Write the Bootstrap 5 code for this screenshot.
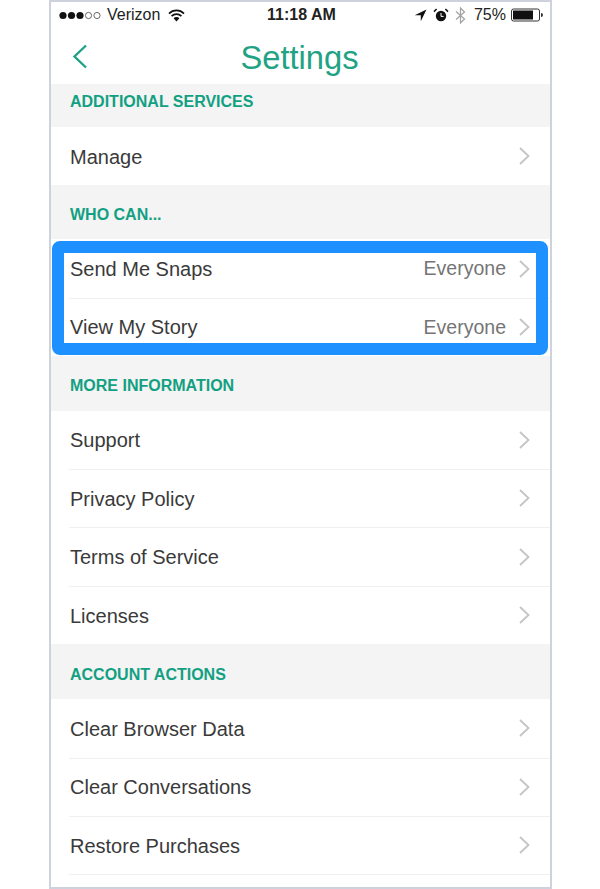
<!DOCTYPE html>
<html lang="en">
<head>
  <meta charset="UTF-8">
  <title>Settings</title>
  <link href="https://cdn.jsdelivr.net/npm/bootstrap@5.3.3/dist/css/bootstrap.min.css" rel="stylesheet">
  <style>
    html, body { height: 889px; overflow: hidden; background: #fff; }
    body { font-family: "Liberation Sans", Arial, sans-serif; }
    .phone-frame { width: 503px; height: 889px; margin-left: 49px; border: 2px solid #cdd2dd; background: #fff; overflow: hidden; }
    .status-bar { height: 25px; padding: 1px 5px 0 7px; font-size: 16px; color: #222; }
    .status-time { font-weight: 700; left: 216px; top: 1px; }
    .icon-gap { margin-left: 6px; }
    .nav-head { height: 57px; }
    .nav-title { color: #1fa384; font-size: 32.7px; line-height: 62px; padding-right: 2px; }
    .back-btn { left: 21px; top: 17px; }
    .group-head { background: #f4f4f4; color: #12a082; font-weight: 700; font-size: 16px; padding-left: 19px; }
    .head-a { height: 43px; padding-top: 6px; }
    .head-b { height: 54px; padding-top: 18px; }
    .head-c { height: 54.5px; padding-top: 18px; }
    .head-d { height: 55px; padding-top: 19px; }
    .set-row { height: 58.4px; padding: 1px 20px 0 19px; font-size: 20px; color: #3a3a3a; }
    .set-row + .set-row::before { content: ""; position: absolute; left: 18px; right: 0; top: 0; border-top: 1px solid #f0f0f0; }
    .set-value { color: #757575; font-size: 19.5px; margin-right: 13px; }
    .row-arrow { margin-bottom: 1px; }
    .highlight-box { inset: 2px 2px 1px 1px; border: 12px solid #1e90ff; border-radius: 8px; pointer-events: none; }
  </style>
</head>
<body>
  <div class="phone-frame">
    <!-- Status bar -->
    <div class="status-bar d-flex align-items-center position-relative">
      <svg width="45" height="9" viewBox="0 0 43 9" class="me-1">
        <circle cx="4" cy="4.5" r="3.6" fill="#111"/>
        <circle cx="12.5" cy="4.5" r="3.6" fill="#111"/>
        <circle cx="21" cy="4.5" r="3.6" fill="#111"/>
        <circle cx="29.5" cy="4.5" r="3.1" fill="none" stroke="#444" stroke-width=".8"/>
        <circle cx="38" cy="4.5" r="3.1" fill="none" stroke="#444" stroke-width=".8"/>
      </svg>
      <span>Verizon</span>
      <svg width="17" height="13" viewBox="0 0 17 13" class="ms-2">
        <path d="M1 4.6a10.4 10.4 0 0 1 15 0" fill="none" stroke="#111" stroke-width="1.7"/>
        <path d="M3.6 7.2a6.7 6.7 0 0 1 9.8 0" fill="none" stroke="#111" stroke-width="1.7"/>
        <path d="M5.6 9.3a3.8 3.8 0 0 1 5.8 0L8.5 12.6z" fill="#111"/>
      </svg>
      <span class="status-time position-absolute">11:18 AM</span>
      <div class="ms-auto d-flex align-items-center">
        <svg width="13" height="13" viewBox="0 0 13 13"><path d="M12.5.5 6.8 12.3V6.2H.7z" fill="#111"/></svg>
        <svg width="16" height="15" viewBox="0 0 16 15" class="icon-gap">
          <circle cx="8" cy="8" r="5.2" fill="#111"/>
          <path d="M8 5v3.4h2.6" fill="none" stroke="#fff" stroke-width="1"/>
          <path d="M1 3.600 3.600 1M15 3.600 12.400 1" stroke="#111" stroke-width="1.500"/>
        </svg>
        <svg width="11" height="17" viewBox="0 0 11 17" class="icon-gap">
          <path d="M1 4.500 9.500 12 5.500 16V1L9.500 5 1 12.500" fill="none" stroke="#a2a2a2" stroke-width="1.200"/>
        </svg>
        <span class="ms-2">75%</span>
        <svg width="35" height="14" viewBox="0 0 33 14" class="ms-1">
          <rect x=".5" y="1" width="28" height="12" rx="2" fill="none" stroke="#333"/>
          <rect x="2" y="2.500" width="20" height="9" fill="#111"/>
          <path d="M30 5v4a2 2 0 0 0 0-4z" fill="#333"/>
        </svg>
      </div>
    </div>

    <!-- Nav -->
    <div class="nav-head position-relative text-center">
      <svg class="back-btn position-absolute" width="16" height="25" viewBox="0 0 16 25">
        <path d="M14 1.500 2.500 12.500 14 23.500" fill="none" stroke="#1fa384" stroke-width="2.400"/>
      </svg>
      <div class="nav-title">Settings</div>
    </div>

    <div class="group-head head-a">ADDITIONAL SERVICES</div>
    <div class="set-row d-flex align-items-center position-relative">
      <span>Manage</span>
      <svg class="row-arrow ms-auto" width="11" height="18" viewBox="0 0 11 18"><path d="M1 1l8.500 8L1 17" fill="none" stroke="#c4c4c4" stroke-width="1.800"/></svg>
    </div>

    <div class="group-head head-b">WHO CAN...</div>
    <div class="position-relative">
      <div class="set-row d-flex align-items-center position-relative">
        <span>Send Me Snaps</span>
        <span class="set-value ms-auto">Everyone</span>
        <svg class="row-arrow" width="11" height="18" viewBox="0 0 11 18"><path d="M1 1l8.500 8L1 17" fill="none" stroke="#c4c4c4" stroke-width="1.800"/></svg>
      </div>
      <div class="set-row d-flex align-items-center position-relative">
        <span>View My Story</span>
        <span class="set-value ms-auto">Everyone</span>
        <svg class="row-arrow" width="11" height="18" viewBox="0 0 11 18"><path d="M1 1l8.500 8L1 17" fill="none" stroke="#c4c4c4" stroke-width="1.800"/></svg>
      </div>
      <div class="highlight-box position-absolute"></div>
    </div>

    <div class="group-head head-c">MORE INFORMATION</div>
    <div class="set-row d-flex align-items-center position-relative">
      <span>Support</span>
      <svg class="row-arrow ms-auto" width="11" height="18" viewBox="0 0 11 18"><path d="M1 1l8.500 8L1 17" fill="none" stroke="#c4c4c4" stroke-width="1.800"/></svg>
    </div>
    <div class="set-row d-flex align-items-center position-relative">
      <span>Privacy Policy</span>
      <svg class="row-arrow ms-auto" width="11" height="18" viewBox="0 0 11 18"><path d="M1 1l8.500 8L1 17" fill="none" stroke="#c4c4c4" stroke-width="1.800"/></svg>
    </div>
    <div class="set-row d-flex align-items-center position-relative">
      <span>Terms of Service</span>
      <svg class="row-arrow ms-auto" width="11" height="18" viewBox="0 0 11 18"><path d="M1 1l8.500 8L1 17" fill="none" stroke="#c4c4c4" stroke-width="1.800"/></svg>
    </div>
    <div class="set-row d-flex align-items-center position-relative">
      <span>Licenses</span>
      <svg class="row-arrow ms-auto" width="11" height="18" viewBox="0 0 11 18"><path d="M1 1l8.500 8L1 17" fill="none" stroke="#c4c4c4" stroke-width="1.800"/></svg>
    </div>

    <div class="group-head head-d">ACCOUNT ACTIONS</div>
    <div class="set-row d-flex align-items-center position-relative">
      <span>Clear Browser Data</span>
      <svg class="row-arrow ms-auto" width="11" height="18" viewBox="0 0 11 18"><path d="M1 1l8.500 8L1 17" fill="none" stroke="#c4c4c4" stroke-width="1.800"/></svg>
    </div>
    <div class="set-row d-flex align-items-center position-relative">
      <span>Clear Conversations</span>
      <svg class="row-arrow ms-auto" width="11" height="18" viewBox="0 0 11 18"><path d="M1 1l8.500 8L1 17" fill="none" stroke="#c4c4c4" stroke-width="1.800"/></svg>
    </div>
    <div class="set-row d-flex align-items-center position-relative">
      <span>Restore Purchases</span>
      <svg class="row-arrow ms-auto" width="11" height="18" viewBox="0 0 11 18"><path d="M1 1l8.500 8L1 17" fill="none" stroke="#c4c4c4" stroke-width="1.800"/></svg>
    </div>
    <div class="set-row position-relative"></div>
  </div>
  <script src="https://cdn.jsdelivr.net/npm/bootstrap@5.3.3/dist/js/bootstrap.bundle.min.js"></script>
</body>
</html>
